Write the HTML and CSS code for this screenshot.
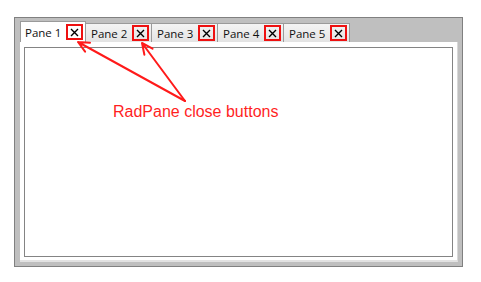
FILE: index.html
```html
<!DOCTYPE html>
<html lang="en">
<head>
  <meta charset="UTF-8" />
  <title>RadPane close buttons</title>
  <link rel="stylesheet" href="styles.css">
</head>
<body>

  <div class="frame">
    <div class="tabs">
      <div class="tab selected"><span class="label">Pane 1</span><span class="close"><svg viewBox="0 0 9 9" width="9" height="9"><path d="M1 1L8 8M8 1L1 8"/></svg></span></div>
      <div class="tab"><span class="label">Pane 2</span><span class="close"><svg viewBox="0 0 9 9" width="9" height="9"><path d="M1 1L8 8M8 1L1 8"/></svg></span></div>
      <div class="tab"><span class="label">Pane 3</span><span class="close"><svg viewBox="0 0 9 9" width="9" height="9"><path d="M1 1L8 8M8 1L1 8"/></svg></span></div>
      <div class="tab"><span class="label">Pane 4</span><span class="close"><svg viewBox="0 0 9 9" width="9" height="9"><path d="M1 1L8 8M8 1L1 8"/></svg></span></div>
      <div class="tab"><span class="label">Pane 5</span><span class="close"><svg viewBox="0 0 9 9" width="9" height="9"><path d="M1 1L8 8M8 1L1 8"/></svg></span></div>
    </div>
    <div class="content">
      <div class="pane"></div>
    </div>
  </div>

  <!-- annotation over the panes -->
  <svg class="arrows" width="481" height="282" viewBox="0 0 481 282">
    <path d="M185 101L78 42M90 42.8L78 42L85.1 51.7"/>
    <path d="M185 101L142 43M152.5 48.7L142 43L144.4 54.8"/>
  </svg>
  <div class="note">RadPane close buttons</div>

</body>
</html>
```

FILE: styles.css
```css
body {
  margin: 0;
  background: #fff;
  font-family: "Open Sans", "Noto Sans", sans-serif;
  position: relative;
  width: 481px;
  height: 282px;
  overflow: hidden;
}

.frame {
  box-sizing: border-box;
  margin: 17px 0 0 14px;
  width: 449px;
  height: 250px;
  border: 1px solid #808080;
  background: #bfbfbf;
  padding: 3px 4px 4px 5px;
  display: flex;
  flex-direction: column;
}

.tabs {
  display: flex;
  align-items: flex-end;
  height: 21px;
}

.tab {
  box-sizing: border-box;
  width: 66px;
  height: 19px;
  display: flex;
  align-items: center;
  padding: 0 2px 0 5px;
  border: 1px solid #9a9a9a;
  border-bottom: none;
  border-left: none;
  background: linear-gradient(#f4f4f4, #e3e3e3);
  font-size: 11.5px;
  color: #111;
}

.tab.selected {
  height: 21px;
  background: #fff;
  border-left: 1px solid #9a9a9a;
  padding-left: 4px;
}

.label {
  flex: 1;
  white-space: nowrap;
}

.close {
  box-sizing: border-box;
  width: 17px;
  height: 16px;
  border: 2px solid #ee1111;
  display: flex;
  align-items: center;
  justify-content: center;
}

.close svg path {
  stroke: #000;
  stroke-width: 1.4;
  fill: none;
}

.content {
  flex: 1;
  display: flex;
  background: #fff;
  padding: 5px 4px 3px 4px;
  border-right: 1px solid #d8d8d8;
  border-bottom: 2px solid #e2e2e2;
}

.pane {
  flex: 1;
  border: 1px solid #848484;
  background: #fff;
}

.arrows {
  position: absolute;
  left: 0;
  top: 0;
  pointer-events: none;
}

.arrows path {
  stroke: #ff1a1a;
  stroke-width: 2;
  fill: none;
  stroke-linecap: round;
  stroke-linejoin: round;
}

.note {
  position: absolute;
  left: 113px;
  top: 103px;
  font-family: "Liberation Sans", Arial, sans-serif;
  font-size: 16px;
  line-height: 18px;
  color: #ff1f1f;
}
```
